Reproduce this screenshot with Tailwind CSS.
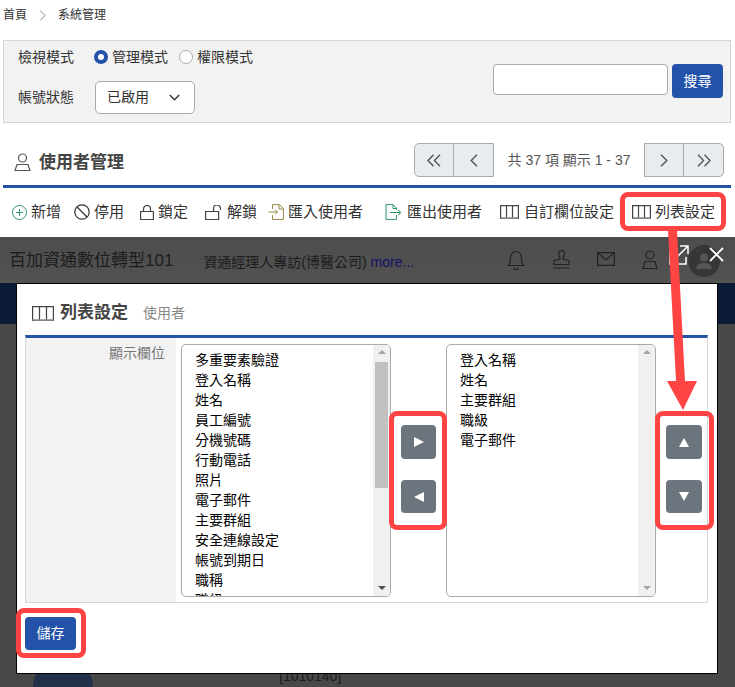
<!DOCTYPE html>
<html lang="zh-Hant">
<head>
<meta charset="UTF-8">
<title>系統管理</title>
<script src="https://cdn.jsdelivr.net/npm/@tailwindcss/browser@4"></script>
</head>
<body class="bg-white">
<div class="relative w-[735px] h-[687px] overflow-hidden bg-white text-[#333] font-['Liberation_Sans','Noto_Sans_CJK_TC',sans-serif]">

  <!-- Breadcrumb -->
  <div class="h-[40px] pt-[5px] flex items-center pb-[15px] pl-[3px] text-[12px] text-[#333]">
    <span>首頁</span>
    <svg class="ml-[12px] mr-[12px]" width="7" height="11" viewBox="0 0 7 11" fill="none" stroke="#888" stroke-width="1"><path d="M1 .5l5 5-5 5"/></svg>
    <span>系統管理</span>
  </div>

  <!-- Filter -->
  <div class="ml-[3px] w-[728px] h-[83px] bg-[#f2f2f2] border border-[#d6d6d6] flex justify-between relative">
    <div class="pl-[14px] pt-[6px] text-[14px]">
      <div class="flex items-center h-[20px]">
        <span class="w-[76px]">檢視模式</span>
        <span class="w-[14px] h-[14px] rounded-full border-[4px] border-[#2353a8] bg-white"></span>
        <span class="ml-[4px]">管理模式</span>
        <span class="ml-[11px] w-[14px] h-[14px] rounded-full border border-[#aaa] bg-white"></span>
        <span class="ml-[4px]">權限模式</span>
      </div>
      <div class="flex items-center mt-[14px] h-[33px]">
        <span class="w-[77px]">帳號狀態</span>
        <div class="w-[100px] h-[33px] bg-white border border-[#aaa] rounded-[5px] flex items-center justify-between pl-[11px] pr-[14px]">
          <span>已啟用</span>
          <svg width="11" height="7" viewBox="0 0 11 7" fill="none" stroke="#333" stroke-width="1.4"><path d="M.8 1l4.7 4.7L10.2 1"/></svg>
        </div>
      </div>
    </div>
    <div class="flex gap-[4px] pt-[23px] pr-[7px]">
      <div class="w-[175px] h-[31px] bg-white border border-[#aaa] rounded-[4px]"></div>
      <div class="w-[51px] h-[34px] bg-[#2353a8] rounded-[4px] text-white text-[14px] flex items-center justify-center">搜尋</div>
    </div>
  </div>

  <!-- Title + pager -->
  <div class="ml-[3px] w-[728px] h-[65px] flex items-end justify-between border-b-[3px] border-[#2353a8]">
    <div class="flex items-center pl-[11px] pb-[10px]">
      <svg width="17" height="19" viewBox="0 0 17 19" fill="none" stroke="#555" stroke-width="1.2"><circle cx="8.5" cy="5" r="4"/><path d="M1 17.5l2-6h11l2 6z"/></svg>
      <span class="ml-[8px] text-[17px] font-bold text-[#444]">使用者管理</span>
    </div>
    <div class="flex items-center pr-[7px] pb-[8px] text-[14px] text-[#555]">
      <div class="flex h-[34px] border border-[#aaa] rounded-l-[5px] bg-[#e9ecef] w-[80px]">
        <div class="w-[39px] flex items-center justify-center border-r border-[#aaa]"><svg width="14" height="13" viewBox="0 0 14 13" fill="none" stroke="#555" stroke-width="1.4"><path d="M6.5 .8L1 6.5l5.5 5.7M13 .8L7.5 6.5l5.5 5.7"/></svg></div>
        <div class="flex-1 flex items-center justify-center"><svg width="8" height="13" viewBox="0 0 8 13" fill="none" stroke="#555" stroke-width="1.4"><path d="M7 .8L1.2 6.5 7 12.2"/></svg></div>
      </div>
      <span class="w-[150px] text-center">共 37 項 顯示 1 - 37</span>
      <div class="flex h-[34px] border border-[#aaa] rounded-r-[5px] bg-[#e9ecef] w-[80px]">
        <div class="w-[39px] flex items-center justify-center border-r border-[#aaa]"><svg width="8" height="13" viewBox="0 0 8 13" fill="none" stroke="#555" stroke-width="1.4"><path d="M1 .8l5.8 5.7L1 12.2"/></svg></div>
        <div class="flex-1 flex items-center justify-center"><svg width="14" height="13" viewBox="0 0 14 13" fill="none" stroke="#555" stroke-width="1.4"><path d="M1 .8l5.5 5.7L1 12.2M7.5 .8L13 6.5l-5.5 5.7"/></svg></div>
      </div>
    </div>
  </div>

  <!-- Toolbar -->
  <div class="h-[49px] flex items-center pl-[12px] pb-[1px] text-[15px] text-[#333] whitespace-nowrap">
    <svg width="15" height="15" viewBox="0 0 15 15" fill="none" stroke="#2e9467" stroke-width="1"><circle cx="7.5" cy="7.5" r="7"/><path d="M7.5 4v7M4 7.5h7"/></svg>
    <span class="ml-[4px]">新增</span>
    <svg class="ml-[13px]" width="16" height="16" viewBox="0 0 16 16" fill="none" stroke="#333" stroke-width="1.2"><circle cx="8" cy="8" r="7.2"/><path d="M3 3l10 10"/></svg>
    <span class="ml-[4px]">停用</span>
    <svg class="ml-[16px]" width="14" height="15" viewBox="0 0 14 15" fill="none" stroke="#444" stroke-width="1.2"><path d="M.6 6.5h12.8v8H.6zM3.500 6.500V4a3.500 3.500 0 017 0v2.500"/></svg>
    <span class="ml-[4px]">鎖定</span>
    <svg class="ml-[17px]" width="18" height="15" viewBox="0 0 18 15" fill="none" stroke="#444" stroke-width="1.2"><path d="M.6 6.500h13v8H.6zM8.500 6.500V3.500a3.500 3.500 0 017 0V5"/></svg>
    <span class="ml-[4px]">解鎖</span>
    <svg class="ml-[11px]" width="16" height="16" viewBox="0 0 16 16" fill="none" stroke="#9b8748" stroke-width="1"><path d="M4.500 5V.6h7l3.900 3.900v10.900H4.500V11M11 .6V5h4.400M.5 8h9M7 5.500L9.500 8 7 10.500"/></svg>
    <span class="ml-[4px]">匯入使用者</span>
    <svg class="ml-[22px]" width="17" height="16" viewBox="0 0 17 16" fill="none" stroke="#2e9467" stroke-width="1"><path d="M1 .6h7l3.500 3.500V6M8 .6V4.500h3.500M11.500 11v4.400H1V.6M5 8.500h10M13 6l3 2.500-3 2.500"/></svg>
    <span class="ml-[5px]">匯出使用者</span>
    <svg class="ml-[18px]" width="19" height="14" viewBox="0 0 19 14" fill="none" stroke="#444" stroke-width="1.2"><path d="M.6.6h17.800v12.800H.6zM6.500.6v12.800M12.500.6v12.800"/><path d="M.6 13h17.800" stroke="#999" stroke-width="1.500"/></svg>
    <span class="ml-[5px]">自訂欄位設定</span>
    <svg class="ml-[18px]" width="19" height="14" viewBox="0 0 19 14" fill="none" stroke="#444" stroke-width="1.2"><path d="M.6.6h17.800v12.800H.6zM6.500.6v12.800M12.500.6v12.800"/><path d="M.6 13h17.800" stroke="#999" stroke-width="1.500"/></svg>
    <span class="ml-[4px]">列表設定</span>
  </div>

  <!-- Dark overlay with the page behind it -->
  <div class="absolute left-0 right-0 top-[237px] bottom-0 bg-[#484848]">
    <div class="h-[46px] bg-gradient-to-b from-[#4d4d4d] to-[#525252] flex items-center text-[#1c1c1c] whitespace-nowrap">
      <span class="ml-[9px] text-[17px] mt-[2px]">百加資通數位轉型101</span>
      <span class="ml-[30px] text-[14px] mt-[5px]">資通經理人專訪(博醫公司) <span class="text-[#10106a]">more...</span></span>
    </div>
    <div class="h-[41px] bg-[#0b1b36]"></div>
    <div class="absolute left-[33px] top-[420px] w-[60px] h-[60px] rounded-full bg-[#22304a]"></div>
    <div class="absolute left-[279px] top-[429px] text-[14px] text-[#1c1c1c]">[1010140]</div>

    <!-- Faded header icons -->
    <svg class="absolute left-[507px] top-[13px]" width="18" height="20" viewBox="0 0 18 20" fill="none" stroke="#222" stroke-width="1.200"><path d="M1 15.500c2-1.500 2.500-3 2.500-7C3.500 4 6 1.500 9 1.500S14.500 4 14.500 8.500c0 4 .5 5.500 2.500 7zM7 18a2 2 0 004 0"/></svg>
    <svg class="absolute left-[552px] top-[13px]" width="19" height="20" viewBox="0 0 19 20" fill="none" stroke="#222" stroke-width="1.200"><path d="M6.500 3.500a3 3 0 016 0c0 2-1.500 3-1.500 5.500l6 1.500v4H2v-4L8 9c0-2.500-1.500-3.500-1.500-5.500zM1 18h17"/></svg>
    <svg class="absolute left-[597px] top-[15px]" width="18" height="14" viewBox="0 0 18 14" fill="none" stroke="#222" stroke-width="1.200"><path d="M.6.6h16.800v12.800H.6zM.6.6L9 8l8.400-7.400"/></svg>
    <svg class="absolute left-[642px] top-[13px]" width="16" height="20" viewBox="0 0 16 20" fill="none" stroke="#222" stroke-width="1.200"><circle cx="8" cy="5" r="4"/><path d="M1 18.500l2-7h10l2 7z"/></svg>
    <div class="absolute left-[688px] top-[8px] w-[32px] h-[32px] rounded-full bg-[#363636] flex items-center justify-center">
      <svg width="18" height="16" viewBox="0 0 18 16" fill="#555"><circle cx="9" cy="4.500" r="4"/><path d="M1 16c0-4 3.500-6 8-6s8 2 8 6z"/></svg>
    </div>

    <!-- Modal close + open icons -->
    <svg class="absolute left-[669px] top-[8px]" width="20" height="20" viewBox="0 0 20 20" fill="none" stroke="#fff" stroke-width="1.500"><path d="M8 3H1v16h16v-7M11 1h8v8M19 1L8 12"/></svg>
    <svg class="absolute left-[709px] top-[10px]" width="15" height="15" viewBox="0 0 15 15" fill="none" stroke="#fff" stroke-width="1.800"><path d="M1 1l13 13M14 1L1 14"/></svg>

    <!-- Modal -->
    <div class="absolute left-[16px] top-[46px] w-[702px] h-[391px] bg-white border border-black pt-[17px] pl-[8px] pr-[9px]">
      <div class="flex items-center h-[24px] ml-[7px]">
        <svg width="22" height="15" viewBox="0 0 22 15" fill="none" stroke="#444" stroke-width="1.200"><path d="M.6.6h20.800v13.800H.6zM7.500.6v13.800M14.500.6v13.800"/><path d="M.6 14h20.800" stroke="#999" stroke-width="1.500"/></svg>
        <span class="ml-[6px] text-[17px] font-bold text-[#444]">列表設定</span>
        <span class="ml-[15px] text-[14px] text-[#888]">使用者</span>
      </div>
      <div class="mt-[10px] h-[268px] border-t-[3px] border-[#2353a8] border-x border-b border-x-[#d6d6d6] border-b-[#d6d6d6] flex">
        <div class="w-[150px] bg-[#f2f2f2] pt-[5px] pr-[11px] text-right text-[14px] text-[#777]">顯示欄位</div>

        <!-- Available columns -->
        <div class="ml-[5px] mt-[6px] w-[210px] h-[253px] border border-[#aaa] rounded-[5px] overflow-hidden flex text-[14px] text-black">
          <div class="flex-1 pl-[13px] pt-[5px] leading-[20px] overflow-hidden">
            <div>多重要素驗證</div><div>登入名稱</div><div>姓名</div><div>員工編號</div><div>分機號碼</div><div>行動電話</div><div>照片</div><div>電子郵件</div><div>主要群組</div><div>安全連線設定</div><div>帳號到期日</div><div>職稱</div><div>職級</div>
          </div>
          <div class="w-[17px] bg-[#f0f0f0] flex flex-col items-center">
            <div class="mt-[5px] w-0 h-0 border-x-[4px] border-x-transparent border-b-[4px] border-b-[#a3a3a3]"></div>
            <div class="mt-[8px] w-[13px] h-[126px] bg-[#c1c1c1]"></div>
            <div class="mt-auto mb-[6px] w-0 h-0 border-x-[4px] border-x-transparent border-t-[4px] border-t-[#505050]"></div>
          </div>
        </div>

        <div class="w-[55px] flex flex-col items-center pt-[87px] gap-[21px]">
          <div class="w-[35px] h-[34px] rounded-[4px] bg-[#6c757d] flex items-center justify-center"><div class="w-0 h-0 border-y-[5px] border-y-transparent border-l-[10px] border-l-white"></div></div>
          <div class="w-[35px] h-[33px] rounded-[4px] bg-[#6c757d] flex items-center justify-center"><div class="w-0 h-0 border-y-[5px] border-y-transparent border-r-[10px] border-r-white"></div></div>
        </div>

        <!-- Selected columns -->
        <div class="mt-[6px] w-[210px] h-[253px] border border-[#aaa] rounded-[5px] overflow-hidden flex text-[14px] text-black">
          <div class="flex-1 pl-[13px] pt-[5px] leading-[20px]">
            <div>登入名稱</div><div>姓名</div><div>主要群組</div><div>職級</div><div>電子郵件</div>
          </div>
          <div class="w-[17px] bg-[#f0f0f0] flex flex-col items-center">
            <div class="mt-[5px] w-0 h-0 border-x-[4px] border-x-transparent border-b-[4px] border-b-[#a3a3a3]"></div>
            <div class="mt-auto mb-[6px] w-0 h-0 border-x-[4px] border-x-transparent border-t-[4px] border-t-[#a3a3a3]"></div>
          </div>
        </div>

        <div class="ml-[10px] flex flex-col pt-[87px] gap-[21px]">
          <div class="w-[36px] h-[34px] rounded-[4px] bg-[#6c757d] flex items-center justify-center"><div class="w-0 h-0 border-x-[5px] border-x-transparent border-b-[9px] border-b-white"></div></div>
          <div class="w-[36px] h-[33px] rounded-[4px] bg-[#6c757d] flex items-center justify-center"><div class="w-0 h-0 border-x-[5px] border-x-transparent border-t-[9px] border-t-white"></div></div>
        </div>
      </div>
      <div class="mt-[14px] w-[51px] h-[33px] bg-[#2353a8] rounded-[4px] text-white text-[14px] flex items-center justify-center">儲存</div>
    </div>
  </div>

  <!-- Red annotations -->
  <div class="absolute left-[620px] top-[192px] w-[106px] h-[39px] border-[5px] border-[#ff4444] rounded-[8px]"></div>
  <div class="absolute left-[389px] top-[411px] w-[58px] h-[119px] border-[5px] border-[#ff4444] rounded-[8px]"></div>
  <div class="absolute left-[655px] top-[411px] w-[59px] h-[119px] border-[5px] border-[#ff4444] rounded-[8px]"></div>
  <div class="absolute left-[16px] top-[608px] w-[70px] h-[50px] border-[5px] border-[#ff4444] rounded-[8px]"></div>
  <svg class="absolute left-0 top-0 pointer-events-none" width="735" height="687" viewBox="0 0 735 687"><path d="M668 230h9l8 151h12l-14 29-16-29h9z" fill="#ff4444"/></svg>
</div>
</body>
</html>
